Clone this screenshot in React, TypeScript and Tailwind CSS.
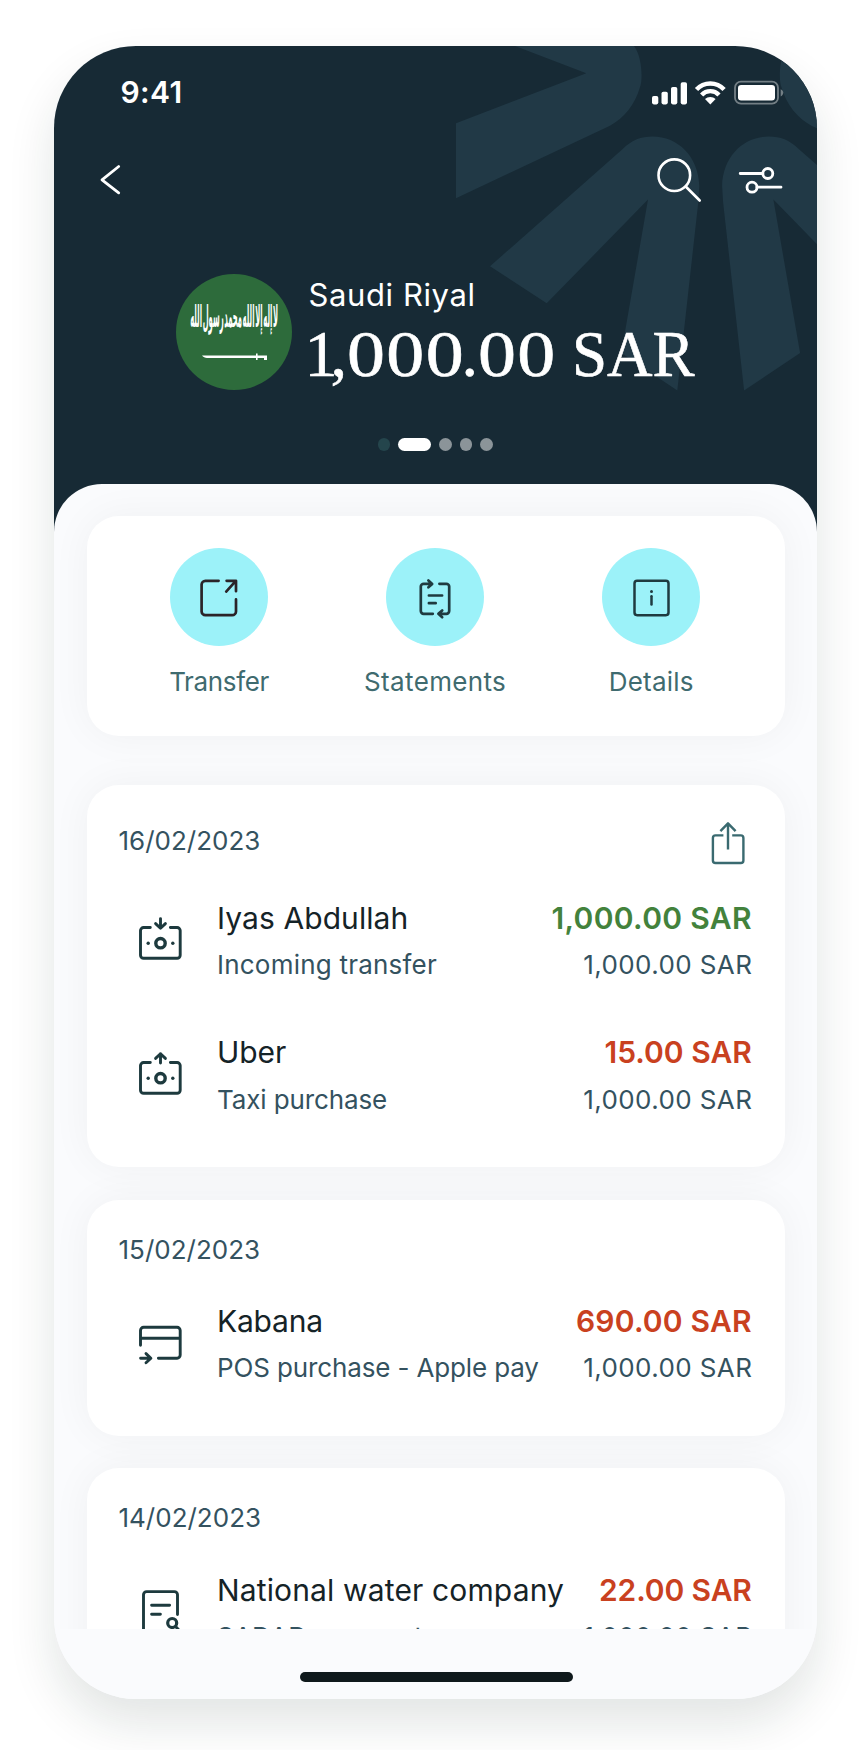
import type { ReactNode } from "react";

type IconProps = { children: ReactNode; className?: string; stroke?: number };

function Icon({ children, className = "", stroke = 2.9 }: IconProps) {
  return (
    <svg
      viewBox="0 0 49 49"
      fill="none"
      stroke="currentColor"
      strokeWidth={stroke}
      strokeLinecap="round"
      strokeLinejoin="round"
      className={"size-[49px] shrink-0 " + className}
    >
      {children}
    </svg>
  );
}

function Bill({ children }: { children: ReactNode }) {
  return (
    <Icon className="-mt-[1px]">
      <path d="M14.3 11.5H7.6a3.1 3.1 0 0 0-3.1 3.1v24.6a3.1 3.1 0 0 0 3.1 3.1h33.5a3.1 3.1 0 0 0 3.1-3.1V14.6a3.1 3.1 0 0 0-3.1-3.1h-6.7" />
      <circle cx="24.5" cy="27.2" r="4.7" strokeWidth="3.4" />
      <circle cx="12.2" cy="27.2" r="1.7" fill="currentColor" stroke="none" />
      <circle cx="36.8" cy="27.2" r="1.7" fill="currentColor" stroke="none" />
      {children}
    </Icon>
  );
}

const IncomingIcon = () => (
  <Bill>
    <path d="M24.5 2.6v9.4M19.6 7.6l4.9 4.7 4.9-4.7" />
  </Bill>
);

const OutgoingIcon = () => (
  <Bill>
    <path d="M24.5 12V2.8M19.6 7.4l4.9-4.7 4.9 4.7" />
  </Bill>
);

const CardIcon = () => (
  <Icon className="mt-[1px]">
    <path d="M4.5 24.2V9.4a3.1 3.1 0 0 1 3.1-3.1h33.5a3.1 3.1 0 0 1 3.1 3.1v24.7a3.1 3.1 0 0 1-3.1 3.1H22.4M4.5 17.2h39.7" />
    <path d="M4.6 37.2h9.6M10 32.6l4.9 4.6-4.9 4.6" />
  </Icon>
);

const BillSearchIcon = () => (
  <Icon>
    <path d="M41.5 25.6V5.7a3.1 3.1 0 0 0-3.1-3.1H10.6a3.1 3.1 0 0 0-3.1 3.1v36.6a3.1 3.1 0 0 0 3.1 3.1h18M15.6 16.3h18M15.6 25.3h8.8" />
    <circle cx="36.2" cy="34" r="4.5" strokeWidth="3.2" />
    <path d="m39.6 37.6 4.6 4.8" />
  </Icon>
);

const TransferIcon = () => (
  <Icon stroke={2.7} className="text-[#2b2429]">
    <path d="M23.6 7.8H10.4a3.8 3.8 0 0 0-3.8 3.8v26.8a3.8 3.8 0 0 0 3.8 3.8h26.8a3.8 3.8 0 0 0 3.8-3.8V26.4" />
    <path d="M31.6 7.8H41v10.4M40.6 8.2l-9.4 10.4" />
  </Icon>
);

const StatementsIcon = () => (
  <Icon stroke={2.7} className="text-[#1f3b40]">
    <path d="M21.8 40.8h-9.2a2.8 2.8 0 0 1-2.8-2.8V13.6a2.8 2.8 0 0 1 2.8-2.8h8M17.4 7.5l3.8 3.4-3.8 3.4" />
    <path d="M28.4 10.8h7a2.8 2.8 0 0 1 2.8 2.8V38a2.8 2.8 0 0 1-2.8 2.8h-7.2M31.2 37.4l-3.8 3.4 3.8 3.4" />
    <path d="M17.9 22.5h13.2M17.9 30.2h6.8" />
  </Icon>
);

const DetailsIcon = () => (
  <Icon stroke={2.5} className="text-[#1f3b40]">
    <rect x="7.5" y="7.8" width="34" height="34.4" rx="2.6" />
    <path d="M24.5 23.2v8.4" />
    <circle cx="24.5" cy="18.4" r="1.5" fill="currentColor" stroke="none" />
  </Icon>
);

const ShareIcon = () => (
  <svg
    viewBox="0 0 49 47"
    fill="none"
    stroke="currentColor"
    strokeWidth="2.4"
    strokeLinejoin="round"
    className="-mb-[1px] h-[47px] w-[49px] shrink-0 overflow-visible text-[#3a6a70]"
  >
    <path d="M19.4 18.4h-7.9a2.6 2.6 0 0 0-2.6 2.6v22.4a2.6 2.6 0 0 0 2.6 2.6h25.3a2.6 2.6 0 0 0 2.6-2.6V21a2.6 2.6 0 0 0-2.6-2.6h-8.6" />
    <path d="M24 32.6V6.4M16.4 14.2 24 6.3l7.6 7.9" />
  </svg>
);

function Petals() {
  const half = (
    <>
      <path d="M461 0H580C589 12 588.500 36 586 41C581 59 570 72 556 79.700L402 152.300V77.300L532.300 27.300Z" />
      <path d="M436 219.700 568.700 102.300C578 93.500 587 90 598.500 90C624 90 644.500 110 645.300 139.500L644.300 155.700 623.300 344 567.300 306.300 594 153 492.700 256.700Z" transform="translate(0 0.6)" />
    </>
  );
  return (
    <svg viewBox="0 0 763 440" className="absolute top-0 left-0 h-[440px] w-[763px] fill-[#213946]">
      {half}
      <g transform="translate(1313.4 0) scale(-1 1)">{half}</g>
    </svg>
  );
}

function StatusIcons() {
  return (
    <svg viewBox="0 0 132 26" className="h-[26px] w-[132px] translate-y-[1px] fill-white">
      <rect x="0" y="16" width="6.300" height="8.400" rx="1.800" />
      <rect x="9.500" y="11.800" width="6.300" height="12.600" rx="1.800" />
      <rect x="19" y="7" width="6.300" height="17.400" rx="1.800" />
      <rect x="28.700" y="2.300" width="6.300" height="22.100" rx="1.800" />
      <g fill="none" stroke="white" strokeWidth="4.400">
        <path d="M44.500 9.600a18.600 18.600 0 0 1 27.600 0" />
        <path d="M49.600 14.900a12 12 0 0 1 17.400 0" />
      </g>
      <path d="M58.300 24.400 53 19.100a7.600 7.600 0 0 1 10.600 0Z" />
      <rect x="83" y="1.700" width="43" height="22" rx="6" fill="none" stroke="white" strokeOpacity="0.4" strokeWidth="1.800" />
      <rect x="86" y="4.900" width="37" height="15.600" rx="3.200" />
      <path d="M128.700 9.200c3.400 1.400 3.400 5.800 0 7.200Z" fillOpacity="0.4" />
    </svg>
  );
}

function Flag() {
  return (
    <div className="flex size-[116px] shrink-0 flex-col items-center overflow-hidden rounded-full bg-[#2d6b3b] pt-[29px] text-white">
      <div
        dir="rtl"
        className="flex h-[28px] w-[86px] items-center justify-center font-['DejaVu_Sans','Noto_Sans',sans-serif] text-[12px] leading-none font-bold whitespace-nowrap [word-spacing:-3px]"
      >
        <span className="inline-block shrink-0 scale-x-[0.570] scale-y-[2.550]">لا إله إلا الله محمد رسول الله</span>
      </div>
      <svg viewBox="0 0 66 8" className="mt-[22.500px] h-2 w-[66px] translate-x-[1px] fill-white">
        <path d="M0 2.600h54V.400h1.600V2.600h9.400v4.400h-3V5h-6.400v2H54V5H5C3 4.800 1 4.200 0 2.600Z" />
      </svg>
    </div>
  );
}

const serif = "inline-block origin-left";

function Header() {
  return (
    <header className="relative h-[486px] shrink-0 bg-[#172a35] text-white">
      <Petals />
      <div className="relative flex h-full flex-col">
        <div className="flex h-[92px] items-center justify-between pr-[33px] pl-[66.500px]">
          <span className="text-[30px] font-semibold tracking-[0.400px]">9:41</span>
          <StatusIcons />
        </div>
        <div className="mt-[16.500px] flex items-center pr-[32px] pl-[32px]">
          <Icon stroke={2.8}>
            <path d="M32.700 11.500 16 24.800l16.700 13" />
          </Icon>
          <Icon stroke={2.600} className="ml-auto">
            <circle cx="19.300" cy="20.200" r="15.800" />
            <path d="m30.700 31.500 14 14" />
          </Icon>
          <Icon stroke={2.800} className="ml-8">
            <circle cx="31.800" cy="18.500" r="5" />
            <circle cx="16" cy="32.200" r="5" />
            <path d="M4.200 18.500h22.600M21 32.200h24" />
          </Icon>
        </div>
        <div className="mt-[70px] flex pl-[122px]">
          <Flag />
          <div className="pt-[1px] pl-[16.500px]">
            <p className="text-[31px] leading-[39px] tracking-[0.600px]">Saudi Riyal</p>
            <p className="mt-px -ml-[4px] flex font-['Liberation_Serif',serif] text-[66px] leading-[78px] whitespace-pre [-webkit-text-stroke:0.600px_white]">
              <span className="w-[42px] tracking-[-7px]">1,</span>
              <span className="w-[115px]">
                <span className={serif + " scale-x-[1.150] tracking-[1.200px]"}>000</span>
              </span>
              <span className="w-[16.500px]">.</span>
              <span className="w-[93.500px]">
                <span className={serif + " scale-x-[1.150] tracking-[1.200px]"}>00</span>{" "}
              </span>
              <span className={serif + " scale-x-[0.955]"}>SAR</span>
            </p>
          </div>
        </div>
        <div className="mt-[45.500px] flex items-center gap-[8px] pl-[323.500px]">
          <span className="size-[12.500px] rounded-full bg-[#24454c]" />
          <span className="h-[12.500px] w-[33px] rounded-full bg-white" />
          <span className="size-[12.500px] rounded-full bg-[#8b9499]" />
          <span className="size-[12.500px] rounded-full bg-[#8b9499]" />
          <span className="size-[12.500px] rounded-full bg-[#8b9499]" />
        </div>
      </div>
    </header>
  );
}

const cardClass = "rounded-[32px] bg-white shadow-[0_0_40px_rgba(20,40,45,0.048)]";

const actions = [
  { label: "Transfer", icon: <TransferIcon />, track: "tracking-[-0.350px]" },
  { label: "Statements", icon: <StatementsIcon />, track: "tracking-[0.350px]" },
  { label: "Details", icon: <DetailsIcon />, track: "tracking-[0.200px]" },
];

function Actions() {
  return (
    <section className={"grid h-[220px] grid-cols-3 pr-[25.500px] pl-[24.500px] pt-[32px] " + cardClass}>
      {actions.map((a) => (
        <div key={a.label} className="flex flex-col items-center">
          <div className="flex size-[98px] items-center justify-center rounded-full bg-[#9cf2f9]">{a.icon}</div>
          <span className={"mt-[15.500px] text-[26px] leading-[40px] text-[#3f6b6f] " + a.track}>{a.label}</span>
        </div>
      ))}
    </section>
  );
}

type Row = {
  icon: ReactNode;
  name: string;
  sub: string;
  amount: string;
  positive?: boolean;
  nameTrack: string;
  subTrack: string;
  amountTrack: string;
};

function Transaction({ row }: { row: Row }) {
  return (
    <div className="flex items-center pr-[1px] pl-[17px]">
      {row.icon}
      <div className="ml-[32.500px] flex-1 whitespace-nowrap">
        <div className="flex h-[46.300px] items-center justify-between text-[30px]">
          <span className={"text-[#152327] " + row.nameTrack}>{row.name}</span>
          <span className={"font-semibold " + row.amountTrack + (row.positive ? " text-[#43823c]" : " text-[#c9411f]")}>
            {row.amount}
          </span>
        </div>
        <div className="flex h-[46.300px] items-center justify-between text-[26px] text-[#34525f]">
          <span className={row.subTrack}>{row.sub}</span>
          <span className="-mr-[0.500px] tracking-[0.400px]">1,000.00 SAR</span>
        </div>
      </div>
    </div>
  );
}

function Day({ date, share, rows }: { date: string; share?: boolean; rows: Row[] }) {
  return (
    <section className={"px-[32px] pt-[32px] pb-[44.700px] " + cardClass}>
      <div className="flex items-center justify-between">
        <span className="translate-y-[1px] text-[26px] leading-[34.600px] text-[#34525f]">{date}</span>
        {share && <ShareIcon />}
      </div>
      <div className="mt-[32px] flex flex-col gap-[42.200px] text-[#1d3a3e]">
        {rows.map((r) => (
          <Transaction key={r.name} row={r} />
        ))}
      </div>
    </section>
  );
}

export default function App() {
  return (
    <div className="flex h-[1750px] w-[867px] overflow-hidden bg-white pt-[46px] pl-[54px] font-[Inter,sans-serif]">
      <main className="flex h-[1653px] w-[763.300px] flex-col overflow-hidden rounded-[82px] bg-[#fafbfd] shadow-[0_24px_48px_rgba(20,40,35,0.120)]">
        <Header />
        <div className="relative -mt-[48.500px] flex min-h-0 flex-1 flex-col overflow-hidden rounded-t-[48px] bg-[#fafbfd]">
          <div className="h-[1145.500px] shrink-0 overflow-hidden px-[32.500px] pt-[32.500px]">
            <Actions />
            <div className="mt-[49px] flex flex-col gap-[32.700px]">
              <Day
                date="16/02/2023"
                share
                rows={[
                  {
                    icon: <IncomingIcon />,
                    name: "Iyas Abdullah",
                    sub: "Incoming transfer",
                    amount: "1,000.00 SAR",
                    positive: true,
                    nameTrack: "tracking-[0.080px]",
                    subTrack: "tracking-[0.220px]",
                    amountTrack: "tracking-[0.320px]",
                  },
                  {
                    icon: <OutgoingIcon />,
                    name: "Uber",
                    sub: "Taxi purchase",
                    amount: "15.00 SAR",
                    nameTrack: "tracking-[-0.100px]",
                    subTrack: "tracking-[-0.120px]",
                    amountTrack: "",
                  },
                ]}
              />
              <Day
                date="15/02/2023"
                rows={[
                  {
                    icon: <CardIcon />,
                    name: "Kabana",
                    sub: "POS purchase - Apple pay",
                    amount: "690.00 SAR",
                    nameTrack: "tracking-[-0.200px]",
                    subTrack: "tracking-[-0.130px]",
                    amountTrack: "tracking-[0.200px]",
                  },
                ]}
              />
              <Day
                date="14/02/2023"
                rows={[
                  {
                    icon: <BillSearchIcon />,
                    name: "National water company",
                    sub: "SADAD payment",
                    amount: "22.00 SAR",
                    nameTrack: "tracking-[0.140px]",
                    subTrack: "tracking-[0.200px]",
                    amountTrack: "tracking-[-0.120px]",
                  },
                ]}
              />
            </div>
          </div>
          <div className="flex flex-1 justify-center pt-[43px] pl-[2px]">
            <span className="h-[10px] w-[273px] rounded-full bg-[#0f191c]" />
          </div>
        </div>
      </main>
    </div>
  );
}
